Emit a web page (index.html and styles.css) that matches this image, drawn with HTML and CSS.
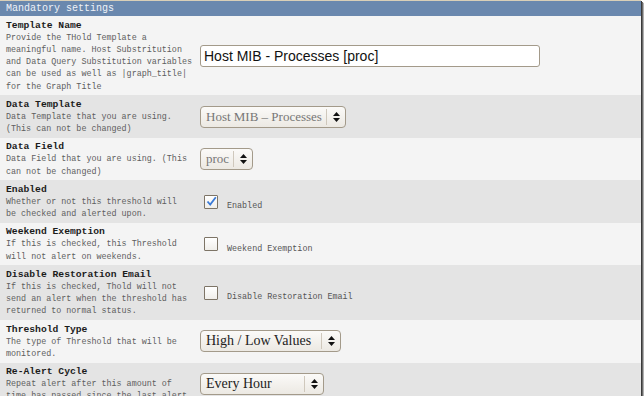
FILE: index.html
```html
<!DOCTYPE html>
<html lang="en">
<head>
  <meta charset="UTF-8" />
  <title>Threshold Template</title>
  <link rel="stylesheet" href="styles.css">
</head>
<body>
  <div class="frame">
    <div class="section-head">Mandatory settings</div>

    <div class="row light">
      <div class="info">
        <div class="title">Template Name</div>
        <div class="desc">Provide the THold Template a meaningful name. Host Substritution and Data Query Substitution variables can be used as well as |graph_title| for the Graph Title</div>
      </div>
      <div class="field">
        <input class="text-input" type="text" value="Host MIB - Processes [proc]">
      </div>
    </div>

    <div class="row dark">
      <div class="info">
        <div class="title">Data Template</div>
        <div class="desc">Data Template that you are using. (This can not be changed)</div>
      </div>
      <div class="field">
        <div class="select disabled w-template">
          <span class="select-text">Host MIB &ndash; Processes</span>
          <span class="select-arrows"><svg width="7" height="10" viewBox="0 0 7 10"><path d="M3.5 0 L7 4 L0 4 Z M0 6 L7 6 L3.5 10 Z" fill="#111"/></svg></span>
        </div>
      </div>
    </div>

    <div class="row light">
      <div class="info">
        <div class="title">Data Field</div>
        <div class="desc">Data Field that you are using. (This can not be changed)</div>
      </div>
      <div class="field">
        <div class="select disabled">
          <span class="select-text">proc</span>
          <span class="select-arrows"><svg width="7" height="10" viewBox="0 0 7 10"><path d="M3.5 0 L7 4 L0 4 Z M0 6 L7 6 L3.5 10 Z" fill="#111"/></svg></span>
        </div>
      </div>
    </div>

    <div class="row dark">
      <div class="info">
        <div class="title">Enabled</div>
        <div class="desc">Whether or not this threshold will<br>be checked and alerted upon.</div>
      </div>
      <div class="field">
        <span class="check"><svg width="11" height="11" viewBox="0 0 11 11"><path d="M1.5 5.5 L4.2 8.5 L9.8 1.2" fill="none" stroke="#3a7ad6" stroke-width="1.8"/></svg></span>
        <span class="check-label">Enabled</span>
      </div>
    </div>

    <div class="row light">
      <div class="info">
        <div class="title">Weekend Exemption</div>
        <div class="desc">If this is checked, this Threshold will not alert on weekends.</div>
      </div>
      <div class="field">
        <span class="check"></span>
        <span class="check-label">Weekend Exemption</span>
      </div>
    </div>

    <div class="row dark">
      <div class="info">
        <div class="title">Disable Restoration Email</div>
        <div class="desc">If this is checked, Thold will not send an alert when the threshold has returned to normal status.</div>
      </div>
      <div class="field">
        <span class="check"></span>
        <span class="check-label">Disable Restoration Email</span>
      </div>
    </div>

    <div class="row light">
      <div class="info">
        <div class="title">Threshold Type</div>
        <div class="desc">The type of Threshold that will be monitored.</div>
      </div>
      <div class="field">
        <div class="select w-type">
          <span class="select-text">High / Low Values</span>
          <span class="select-arrows"><svg width="7" height="10" viewBox="0 0 7 10"><path d="M3.5 0 L7 4 L0 4 Z M0 6 L7 6 L3.5 10 Z" fill="#111"/></svg></span>
        </div>
      </div>
    </div>

    <div class="row dark">
      <div class="info">
        <div class="title">Re-Alert Cycle</div>
        <div class="desc">Repeat alert after this amount of time has passed since the last alert.</div>
      </div>
      <div class="field">
        <div class="select w-cycle">
          <span class="select-text">Every Hour</span>
          <span class="select-arrows"><svg width="7" height="10" viewBox="0 0 7 10"><path d="M3.5 0 L7 4 L0 4 Z M0 6 L7 6 L3.5 10 Z" fill="#111"/></svg></span>
        </div>
      </div>
    </div>
  </div>
</body>
</html>
```

FILE: styles.css
```css
body {
  margin: 0;
  background: #ffffff;
  font-family: "Liberation Mono", monospace;
}

.frame {
  width: 641px;
  height: 396px;
  overflow: hidden;
  background: #f4f4f4;
  box-shadow: 1px 1px 0 #3a3a3a, 2px 2px 0 #6a6a6a, 3px 3px 1px #b0b0b0;
  border-top: 1px solid #d9cfb8;
  box-sizing: border-box;
}

.section-head {
  height: 15px;
  line-height: 15px;
  padding-left: 6px;
  background: #6a88ae;
  color: #eef2f8;
  font-size: 10px;
}

.row {
  display: grid;
  grid-template-columns: 200px 1fr;
}

.row.light {
  background: #f4f4f4;
}

.row.dark {
  background: #e4e4e4;
}

.info {
  padding: 3.5px 4px 2.5px 6px;
}

.title {
  font-size: 9.7px;
  font-weight: bold;
  line-height: 12px;
  color: #1c1c1c;
}

.desc {
  font-size: 8.4px;
  line-height: 12.25px;
  color: #5e5e5e;
}

.field {
  display: flex;
  align-items: center;
}

.text-input {
  width: 340px;
  height: 22px;
  box-sizing: border-box;
  margin: 0;
  padding: 0 3px;
  border: 1px solid #a39a8a;
  border-radius: 3px;
  background: #fff;
  font-family: "Liberation Sans", sans-serif;
  font-size: 14px;
  color: #111;
  outline: none;
}

.select {
  display: flex;
  align-items: center;
  height: 22px;
  box-sizing: border-box;
  border: 1px solid #a39a8a;
  border-radius: 4px;
  background: linear-gradient(#fbfaf8, #ece9e3);
  font-family: "Liberation Serif", serif;
  font-size: 14px;
  color: #222;
}

.select.disabled {
  color: #777;
  font-size: 13px;
}

.select-text {
  flex: 1;
  padding: 0 4px 0 5px;
  white-space: nowrap;
  border-right: 1px solid #cfc8bc;
  line-height: 16px;
}

.select-arrows {
  width: 18px;
  display: flex;
  justify-content: center;
  align-items: center;
}

.w-template {
  width: 146px;
}

.w-type {
  width: 141px;
}

.w-cycle {
  width: 124px;
}

.check {
  width: 12px;
  height: 12px;
  margin-left: 4px;
  border: 1px solid #7d7466;
  border-radius: 1px;
  background: linear-gradient(#ffffff, #f0eeea);
  display: flex;
  align-items: center;
  justify-content: center;
}

.check-label {
  margin-left: 9px;
  margin-top: 9px;
  font-size: 8.4px;
  color: #555;
}
```
